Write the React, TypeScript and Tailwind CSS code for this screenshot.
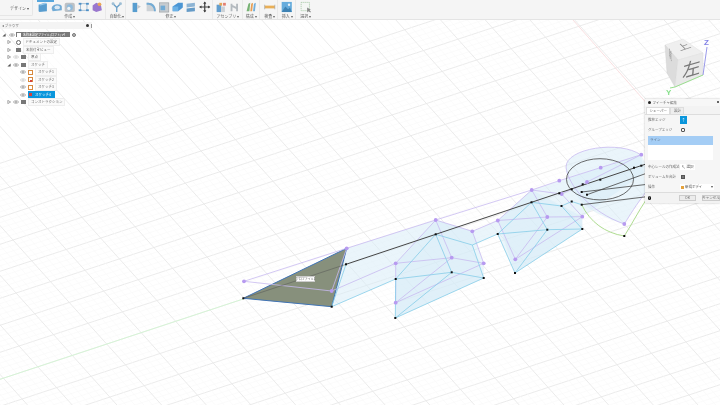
import React from "react";

const jp = "font-['Noto_Sans_CJK_JP','Liberation_Sans',sans-serif]";

const purplePts = [
  [244, 281.3], [346.7, 248.3], [331.7, 291], [435.7, 220], [395.7, 263.3], [395.7, 302.7], [451.7, 257.7],
  [472.3, 231.3], [483.7, 263.3], [497.8, 220.5], [515.3, 259.3], [547.3, 217], [582.3, 216.7],
  [531.7, 190], [559.3, 180.7], [561.7, 194], [600.7, 167.7], [641.3, 154.7], [624.3, 224], [587, 182],
];

const blackPts = [
  [243.3, 298.3], [346, 264.3], [331.7, 306.7], [435.7, 234.3], [395.7, 279], [395.3, 318], [451.7, 272.3],
  [483.7, 278], [497.7, 234], [531.5, 202.3], [515, 273], [547.3, 229.7], [582.3, 229], [561.5, 206],
  [559.3, 193.3], [571.7, 189.3], [571.7, 201.5], [582.7, 184.3], [600.3, 179.7], [634, 167.7], [641.3, 165.7],
  [581.7, 192], [587, 194.7], [581.7, 204.7], [624.3, 236],
];

// perspective is close to flat here so the grid is two sheared families
function Grid() {
  const minorA = Array.from({ length: 130 }, (_, i) => i);
  const minorB = Array.from({ length: 240 }, (_, i) => i);
  return (
    <g>
      {minorA.map((i) => {
        const c = 379.3 + (i - 40) * 5.4;
        return <line key={i} x1={0} y1={c} x2={720} y2={c - 0.33 * 720} stroke={i % 5 === 0 ? "#e9e9e9" : "#f8f8f8"} strokeWidth={i % 5 === 0 ? 0.9 : 0.6} />;
      })}
      {minorB.map((i) => {
        const x0 = 22 + (i - 100) * 8.94;
        return <line key={i} x1={x0 - 250 / 1.11} y1={0} x2={x0 + 155 / 1.11} y2={405} stroke={i % 5 === 0 ? "#e9e9e9" : "#f8f8f8"} strokeWidth={i % 5 === 0 ? 0.9 : 0.6} />;
      })}
      <line x1={0} y1={379.3} x2={346} y2={265} stroke="#d4f5d4" strokeWidth={0.9} />
      <line x1={573} y1={20} x2={650} y2={107} stroke="#f8dcde" strokeWidth={0.9} />
    </g>
  );
}

function Sketch() {
  return (
    <g>
      <g fill="#d6ebf8" fillOpacity={0.5}>
        <polygon points="346.7,248.3 435.7,220 472.3,231.3 497.8,220.5 531.7,190 641.3,154.7 648,170 582.3,216.7 582.3,229 515,273 497.7,234 472.3,245 483.7,278 395.3,318 395.7,279 331.7,306.7" />
        <polygon points="395.7,263.3 435.7,220 472.3,231.3 483.7,263.3 483.7,278 395.3,318" />
        <polygon points="497.8,220.5 531.7,190 582.3,216.7 582.3,229 515,273" />
        <path d="M566,167 C566,148 620,140 641,155 L646,192 C636,205 630,215 624.3,224 C610,220 590,212 580,200 C572,190 566,180 566,167 Z" />
      </g>
      <polygon points="243.3,298.3 346.7,248.3 331.7,306.7" fill="#87907c" stroke="#3f73b5" strokeWidth={1} />

      <g fill="none" stroke="#c8baf0" strokeWidth={0.8}>
        <polyline points="244,281.3 346.7,248.3 435.7,220 531.7,190 559.3,180.7 641.3,154.7" />
        <polyline points="244,281.3 331.7,291 346.7,248.3" />
        <polyline points="331.7,291 395.7,263.3" />
        <polyline points="435.7,220 395.7,263.3 395.7,302.7 483.7,263.3" />
        <polyline points="395.7,263.3 451.7,257.7 483.7,263.3 472.3,231.3 435.7,220 451.7,257.7 395.7,302.7" />
        <polyline points="472.3,231.3 497.8,220.5" />
        <polyline points="531.7,190 497.8,220.5 515.3,259.3 582.3,216.7 547.3,217 497.8,220.5" />
        <polyline points="531.7,190 547.3,217 515.3,259.3" />
        <polyline points="531.7,190 561.7,194 582.3,216.7" />
        <polyline points="561.7,194 587,182 641.3,154.7" />
        <path d="M566,167 C566,148 620,140 641,155" />
        <path d="M566,167 C568,185 590,212 624.3,224 C630,215 636,205 646,192" />
      </g>

      <g fill="none" stroke="#85cde8" strokeWidth={0.8}>
        <polyline points="346,264.3 331.7,306.7 395.7,279" />
        <polyline points="435.7,234.3 395.7,279 395.3,318 483.7,278 451.7,272.3 395.7,279" />
        <polyline points="435.7,234.3 451.7,272.3 395.3,318" />
        <polyline points="435.7,234.3 472.3,245 483.7,278" />
        <polyline points="472.3,245 497.7,234 531.5,202.3 547.3,229.7 497.7,234 515,273 582.3,229 547.3,229.7 515,273" />
        <polyline points="531.5,202.3 561.5,206 571.7,201.5 581.7,204.7" />
        <polyline points="561.5,206 582.3,229" />
      </g>

      <g fill="none" stroke="#a6d884" strokeWidth={0.9}>
        <path d="M581.7,204.7 C590,222 605,233 624.3,236 C632,224 638,212 646,200" />
      </g>

      <g fill="none" stroke="#444" strokeWidth={0.8}>
        <ellipse cx={600} cy={179.3} rx={33.5} ry={20.6} />
        <line x1={346} y1={264.3} x2={650} y2={162.7} strokeWidth={1} />
        <line x1={243.3} y1={298.3} x2={346} y2={264.3} stroke="#555" strokeWidth={0.5} />
        <line x1={587} y1={194.7} x2={650} y2={172} />
        <line x1={581.7} y1={192} x2={650} y2={184} />
        <line x1={581.7} y1={204.7} x2={650} y2={196.3} />
      </g>

      {purplePts.map(([x, y]) => (
        <circle key={`${x}-${y}`} cx={x} cy={y} r={1.9} fill="#b79af0" />
      ))}
      {blackPts.map(([x, y]) => (
        <rect key={`${x}-${y}`} x={x - 1} y={y - 1} width={2} height={2} fill="#111" />
      ))}
    </g>
  );
}

function ToolIcon({ children }: { children: React.ReactNode }) {
  return (
    <svg viewBox="0 0 13 13" className="w-[13.5px] h-[12px] shrink-0 opacity-85">
      {children}
    </svg>
  );
}

const createIcons = [
  <><path d="M2 4 L9 2 L11 3 L11 11 L3 12 L2 11 Z" fill="#3d8ec9" /><path d="M2 4 L9 2 L11 3 L4 5 Z" fill="#8cc3e8" /></>,
  <><path d="M1 8 C1 3 11 2 12 6 L12 10 L2 11 Z" fill="#5c9fd0" /><ellipse cx={7} cy={7} rx={3} ry={2} fill="#d8e8f3" /></>,
  <><rect x={1} y={2} width={11} height={10} rx={2} fill="#b4b8bd" /><circle cx={6.5} cy={7} r={3.4} fill="#7fb2d8" /><circle cx={5.5} cy={8} r={1.8} fill="#eef2f5" /></>,
  <><rect x={3} y={3} width={7} height={7} fill="none" stroke="#6a97bd" strokeWidth={0.7} /><g fill="#2f7ec0"><rect x={1} y={2} width={3} height={2} /><rect x={9} y={2} width={3} height={2} /><rect x={1} y={9} width={3} height={2} /><rect x={9} y={9} width={3} height={2} /></g></>,
  <><path d="M2 5 L6 2 L11 4 L12 10 L6 12 L2 10 Z" fill="#8b62c8" /><circle cx={9.5} cy={3.5} r={2} fill="#ea9b3c" /></>,
];
const automateIcon = <><path d="M6.5 12 L6.5 7 M6.5 7 L2.5 3 M6.5 7 L10.5 3" stroke="#4f8fbf" strokeWidth={1.4} fill="none" /><circle cx={2.5} cy={3} r={1.6} fill="#8fb5d0" /><circle cx={10.5} cy={3} r={1.6} fill="#8fb5d0" /></>;
const modifyIcons = [
  <><path d="M2 2 L7 2 L7 12 L2 12 Z" fill="#3d8ec9" /><path d="M7 4 L11 6 L7 9 Z" fill="#b9c0c6" /></>,
  <><path d="M2 2 C8 1 12 5 12 11 L2 11 Z" fill="#c7ccd1" /><path d="M2 2 C8 1 12 5 12 11 L10 11 C10 6 7 4 2 4 Z" fill="#5c9fd0" /></>,
  <><rect x={2} y={2} width={10} height={10} fill="#c0c5ca" stroke="#7d8388" strokeWidth={0.6} /><rect x={3} y={5} width={5} height={5} fill="#5c9fd0" /></>,
  <><path d="M1 6 L7 2 L12 2 L12 7 L7 11 L1 11 Z" fill="#2f86cf" /><path d="M1 6 L7 6 L7 11 L1 11 Z" fill="#56a7e4" /></>,
  <><path d="M2 3 L11 2 L11 6 L2 7 Z" fill="#7ca9cf" /><path d="M2 8 L11 7 L11 11 L2 12 Z" fill="#4d8cbf" /></>,
  <><path d="M6.5 1 L6.5 12 M1 6.5 L12 6.5" stroke="#222" strokeWidth={1.3} /><path d="M6.5 0.5 L4.8 3 L8.2 3 Z M6.5 12.5 L4.8 10 L8.2 10 Z M0.5 6.5 L3 4.8 L3 8.2 Z M12.5 6.5 L10 4.8 L10 8.2 Z" fill="#222" /></>,
];
const assembleIcons = [
  <><rect x={2} y={4} width={5} height={8} fill="#4a90c8" /><rect x={7} y={6} width={4} height={6} fill="#c6cbd0" /><rect x={5} y={2} width={3} height={3} fill="#e39a3d" /><rect x={9} y={2} width={3} height={3} fill="#e06a5a" /></>,
  <><path d="M3 3 L3 11 M9 3 L9 11 M3 5 L9 8" stroke="#a9b0b6" strokeWidth={2} fill="none" /></>,
];
const configIcon = <><path d="M2 11 L4 3 L6 2 L5 11 Z" fill="#62a75e" /><path d="M6 11 L7 3 L9 2 L8 11 Z" fill="#e5913a" /><path d="M9 11 L10 3 L12 2 L11 11 Z" fill="#5aa2d6" /></>;
const inspectIcon = <><rect x={1} y={5} width={11} height={3} fill="#e8a33c" /><path d="M1 4 L1 9 M12 4 L12 9" stroke="#8a8f94" strokeWidth={0.7} /></>;
const insertIcon = <><rect x={1} y={1} width={11} height={11} fill="#4fa0d8" /><path d="M1 12 L5 6 L8 9 L10 7 L12 12 Z" fill="#1f6fa8" /><circle cx={9} cy={4} r={1.3} fill="#e6f2fa" /></>;
const selectIcon = <><rect x={1.5} y={1.5} width={9} height={9} fill="#f4f7f4" stroke="#8fbb8f" strokeWidth={0.8} strokeDasharray="1.4 0.8" /><path d="M8 7 L8 12.5 L9.5 11 L11.5 12.5 L12 11.5 L10.5 10 L12 9.5 Z" fill="#777" /></>;

function Group({ icons, label, border = true }: { icons: React.ReactNode[]; label: string; border?: boolean }) {
  return (
    <div className={`flex flex-col items-center px-[1px] ${border ? "border-r border-[#e9e9e9]" : ""}`}>
      <div className="flex h-[13px] items-end">
        {icons.map((icon, i) => (
          <ToolIcon key={i}>{icon}</ToolIcon>
        ))}
      </div>
      <div className="text-[4px] leading-[6px] text-[#666] whitespace-nowrap">{label} ▾</div>
    </div>
  );
}

function Toolbar() {
  return (
    <div className={`flex h-[20px] shrink-0 items-stretch bg-[#f5f5f5] border-b border-[#e4e4e4] ${jp}`}>
      <div className="w-[33px] mb-[3px] flex items-center justify-end pr-[3px] border-r border-b border-[#e6e6e6] rounded-br-[2px] text-[4px] text-[#555]">
        デザイン ▾
      </div>
      <div className="relative ml-[2px] flex">
        <div className="absolute left-[2px] top-0 h-[1.5px] w-[17px] bg-[#58a7dd]" />
        <Group icons={createIcons} label="作成" />
      </div>
      <div className="ml-[3px]">
        <Group icons={[automateIcon]} label="自動化" />
      </div>
      <div className="ml-[3px]">
        <Group icons={modifyIcons} label="修正" />
      </div>
      <div>
        <Group icons={assembleIcons} label="アセンブリ" />
      </div>
      <div>
        <Group icons={[configIcon]} label="構成" />
      </div>
      <div className="ml-[2px]">
        <Group icons={[inspectIcon]} label="検査" />
      </div>
      <div className="ml-[1px]">
        <Group icons={[insertIcon]} label="挿入" />
      </div>
      <div className="ml-[2px]">
        <Group icons={[selectIcon]} label="選択" border={false} />
      </div>
    </div>
  );
}

function Eye({ faint }: { faint?: boolean }) {
  return (
    <svg viewBox="0 0 8 5" className="w-[6px] h-[4px] shrink-0">
      <path d="M0.5 2.5 C2 0.3 6 0.3 7.5 2.5 C6 4.7 2 4.7 0.5 2.5 Z" fill="none" stroke={faint ? "#bbb" : "#777"} strokeWidth={0.8} />
      <circle cx={4} cy={2.5} r={1} fill={faint ? "#bbb" : "#777"} />
    </svg>
  );
}

function Expander({ open }: { open?: boolean }) {
  return (
    <svg viewBox="0 0 5 5" className="w-[4px] h-[4px] shrink-0">
      {open ? <path d="M4.5 0.5 L4.5 4.5 L0.5 4.5 Z" fill="#555" /> : <path d="M1 0.5 L4.5 2.5 L1 4.5 Z" fill="#fff" stroke="#666" strokeWidth={0.7} />}
    </svg>
  );
}

function Folder() {
  return <span className="block w-[5px] h-[4px] shrink-0 bg-[#777]" />;
}

function SketchIcon({ red }: { red?: boolean }) {
  return (
    <span className="relative block w-[5px] h-[5px] shrink-0 bg-white border-[0.5px] border-[#d8893e]">
      {red && <span className="absolute -bottom-[0.5px] left-[1px] w-[2px] h-[2px] bg-[#d6403a]" />}
    </span>
  );
}

function TreeRow({ indent, children }: { indent: string; children: React.ReactNode }) {
  return <div className={`flex h-[7.5px] items-center gap-[2px] ${indent}`}>{children}</div>;
}

function Label({ children, active }: { children: React.ReactNode; active?: boolean }) {
  return (
    <span className={`text-[3.5px] leading-[6px] px-[2px] whitespace-nowrap ${active ? "bg-[#0a96dc] text-white" : "bg-[#fafafa] border-[0.5px] border-[#eee] text-[#666]"}`}>
      {children}
    </span>
  );
}

function BrowserPanel() {
  return (
    <div className={`absolute left-0 top-[2px] w-[92px] ${jp}`}>
      <div className="flex h-[7px] items-center bg-[#f4f4f4] pl-[2px] pr-[1px] text-[3.5px] text-[#777]">
        <span>◂ ブラウザ</span>
        <span className="ml-auto w-[2.5px] h-[2.5px] rounded-full bg-[#333]" />
        <span className="ml-[2px] w-[0.5px] h-[4px] bg-[#999]" />
      </div>
      <div className="pt-[2px]">
        <TreeRow indent="pl-[2px]">
          <Expander open />
          <span className="ml-[1px]"><Eye /></span>
          <span className="flex items-center bg-[#7a7a7a] h-[5px] w-[54px] ml-[-1px] pl-[1px] text-[3px] text-white whitespace-nowrap overflow-hidden">
            <span className="w-[4px] h-[4px] bg-white mr-[2px] shrink-0" />
            名称未設定ファイル(ロフト) v4
          </span>
          <span className="w-[3.5px] h-[3.5px] rounded-full border-[0.5px] border-[#777] bg-[#bbb]" />
        </TreeRow>
        <TreeRow indent="pl-[7px]">
          <Expander />
          <span className="w-[4.5px] h-[4.5px] rounded-full border border-[#666] ml-[3px]" />
          <Label>ドキュメントの設定</Label>
        </TreeRow>
        <TreeRow indent="pl-[7px]">
          <Expander />
          <span className="ml-[3px]"><Folder /></span>
          <Label>名前付きビュー</Label>
        </TreeRow>
        <TreeRow indent="pl-[7px]">
          <Expander />
          <Eye faint />
          <Folder />
          <Label>原点</Label>
        </TreeRow>
        <TreeRow indent="pl-[7px]">
          <Expander open />
          <Eye />
          <Folder />
          <Label>スケッチ</Label>
        </TreeRow>
        <TreeRow indent="pl-[20px]">
          <Eye />
          <SketchIcon />
          <Label>スケッチ1</Label>
        </TreeRow>
        <TreeRow indent="pl-[20px]">
          <Eye faint />
          <SketchIcon red />
          <Label>スケッチ2</Label>
        </TreeRow>
        <TreeRow indent="pl-[20px]">
          <Eye />
          <SketchIcon />
          <Label>スケッチ3</Label>
        </TreeRow>
        <TreeRow indent="pl-[20px]">
          <Eye />
          <span className="flex h-[7px] w-[27px] items-center bg-[#0a96dc] pl-[1px] gap-[3px] text-[3.5px] text-white whitespace-nowrap">
            <span className="w-[3px] h-[3px] bg-[#d6403a] shrink-0" />
            スケッチ4
          </span>
        </TreeRow>
        <TreeRow indent="pl-[7px]">
          <Expander />
          <Eye />
          <Folder />
          <Label>コンストラクション</Label>
        </TreeRow>
      </div>
    </div>
  );
}

function ViewCube() {
  return (
    <svg viewBox="0 0 60 64" className="absolute left-[660px] top-[16px] w-[60px] h-[64px]">
      <polygon points="5,9 23,3 43,17 18,24" fill="#efefef" stroke="#dcdcdc" strokeWidth={0.4} />
      <polygon points="5,9 18,24 15,51 7,37" fill="#dcdcdc" stroke="#cfcfcf" strokeWidth={0.4} />
      <polygon points="18,24 43,17 43,39 15,51" fill="#e9e9e9" stroke="#dcdcdc" strokeWidth={0.4} />
      <text transform="matrix(0.9 -0.3 0.5 0.5 20 15)" fontSize={13} fill="#888" fontFamily="'Noto Sans CJK JP',sans-serif">上</text>
      <text transform="matrix(0.22 0.42 0 0.85 9 20)" fontSize={13} fill="#888" fontFamily="'Noto Sans CJK JP',sans-serif">前</text>
      <text transform="matrix(1 -0.3 -0.08 1 22 42)" fontSize={18} fill="#777" fontFamily="'Noto Sans CJK JP',sans-serif">左</text>
      <line x1={43} y1={39} x2={47} y2={11} stroke="#8f8fe8" strokeWidth={0.9} />
      <line x1={15} y1={51} x2={43} y2={39} stroke="#9adf8f" strokeWidth={1} />
      <line x1={15} y1={51} x2={10} y2={52} stroke="#9adf8f" strokeWidth={1} />
      <text x={44} y={9} fontSize={8} fontWeight={700} fill="#8080e6" fontFamily="'Liberation Sans',sans-serif">Z</text>
      <text x={6} y={59} fontSize={8} fontWeight={700} fill="#86e08a" fontFamily="'Liberation Sans',sans-serif">Y</text>
    </svg>
  );
}

function FieldRow({ label, children }: { label: string; children: React.ReactNode }) {
  return (
    <div className="flex h-[10px] items-center pl-[3px]">
      <span className="w-[32px] text-[3.5px] text-[#666] whitespace-nowrap">{label}</span>
      {children}
    </div>
  );
}

function LoftDialog() {
  return (
    <div className={`absolute left-[645px] top-[79px] w-[75px] bg-[#f3f3f3] shadow-[0_0_2px_rgba(0,0,0,0.25)] ${jp}`}>
      <div className="flex h-[6.5px] items-center bg-[#f7f7f7] pl-[3px] pr-[1px] text-[3.5px] text-[#666]">
        <span className="w-[2.5px] h-[2.5px] rounded-full bg-[#222] mr-[2px]" />
        フィーチャ編集
        <span className="ml-auto w-[2px] h-[2px] rounded-full bg-[#333]" />
      </div>
      <div className="flex pl-[1px] pt-[1px] h-[8px] text-[3.5px] text-[#666]">
        <span className="flex items-center px-[2.5px] bg-white border-[0.5px] border-[#ddd] border-b-0">シェーパー</span>
        <span className="flex items-center px-[2.5px] bg-[#eee] border-[0.5px] border-[#ddd] border-b-0">設計</span>
      </div>
      <div className="bg-[#f6f6f6] border-t-[0.5px] border-[#ddd]">
        <FieldRow label="推移エッジ">
          <span className="flex items-center justify-center w-[7px] h-[8px] bg-[#0a96dc] text-[4px] text-white">↑</span>
        </FieldRow>
        <FieldRow label="グループエッジ">
          <span className="ml-[1px] w-[4px] h-[4px] border-[0.5px] border-[#555] rounded-[1px]" />
        </FieldRow>
        <div className="mx-[3px] mt-[1px] h-[24.5px] w-[65px] bg-white">
          <div className="flex h-[9px] items-center bg-[#a4cdf5] pl-[2px] text-[3.5px] text-[#567]">ライン</div>
        </div>
        <div className="mt-[2px]">
          <FieldRow label="中心レールの作成法">
            <span className="flex items-center gap-[1px] bg-white px-[1.5px] h-[6px] text-[3.5px] text-[#555]">
              <span className="text-[4px]">↖</span>選択
            </span>
          </FieldRow>
          <FieldRow label="ボリュームを合計">
            <span className="ml-[1px] w-[4px] h-[4px] bg-[#777] border-[0.5px] border-[#555]" />
          </FieldRow>
          <FieldRow label="操作">
            <span className="flex flex-1 mr-[6px] items-center gap-[1px] bg-white px-[1px] h-[6px] text-[3.5px] text-[#555] whitespace-nowrap">
              <span className="w-[3px] h-[3px] bg-[#e5a23c] shrink-0" />新規ボディ
              <span className="ml-auto">▾</span>
            </span>
          </FieldRow>
        </div>
      </div>
      <div className="flex h-[11px] items-center bg-[#f3f3f3] border-t-[0.5px] border-[#ddd] pl-[2.5px]">
        <span className="flex items-center justify-center w-[4px] h-[4px] rounded-full bg-[#111] text-[3px] text-white">i</span>
        <span className="ml-[28px] flex items-center justify-center w-[19px] h-[6px] bg-[#ececec] border-[0.5px] border-[#ccc] text-[3.5px] text-[#666]">OK</span>
        <span className="ml-[6px] flex items-center justify-center w-[18px] h-[6px] bg-[#ececec] border-[0.5px] border-[#ccc] text-[3.5px] text-[#666] whitespace-nowrap">キャンセル</span>
      </div>
    </div>
  );
}

export default function App() {
  return (
    <div className="flex h-[405px] w-[720px] flex-col overflow-hidden bg-white blur-[0.4px]">
      <Toolbar />
      <div className="relative flex-1">
        <svg viewBox="0 20 720 385" className="absolute inset-0 w-full h-full">
          <Grid />
          <Sketch />
        </svg>
        <BrowserPanel />
        <ViewCube />
        <LoftDialog />
        <div className={`absolute left-[296px] top-[256px] flex h-[6px] w-[19px] items-center justify-center bg-white border-[0.5px] border-[#ccc] text-[3px] text-[#555] whitespace-nowrap ${jp}`}>
          プロファイル1
        </div>
      </div>
    </div>
  );
}
